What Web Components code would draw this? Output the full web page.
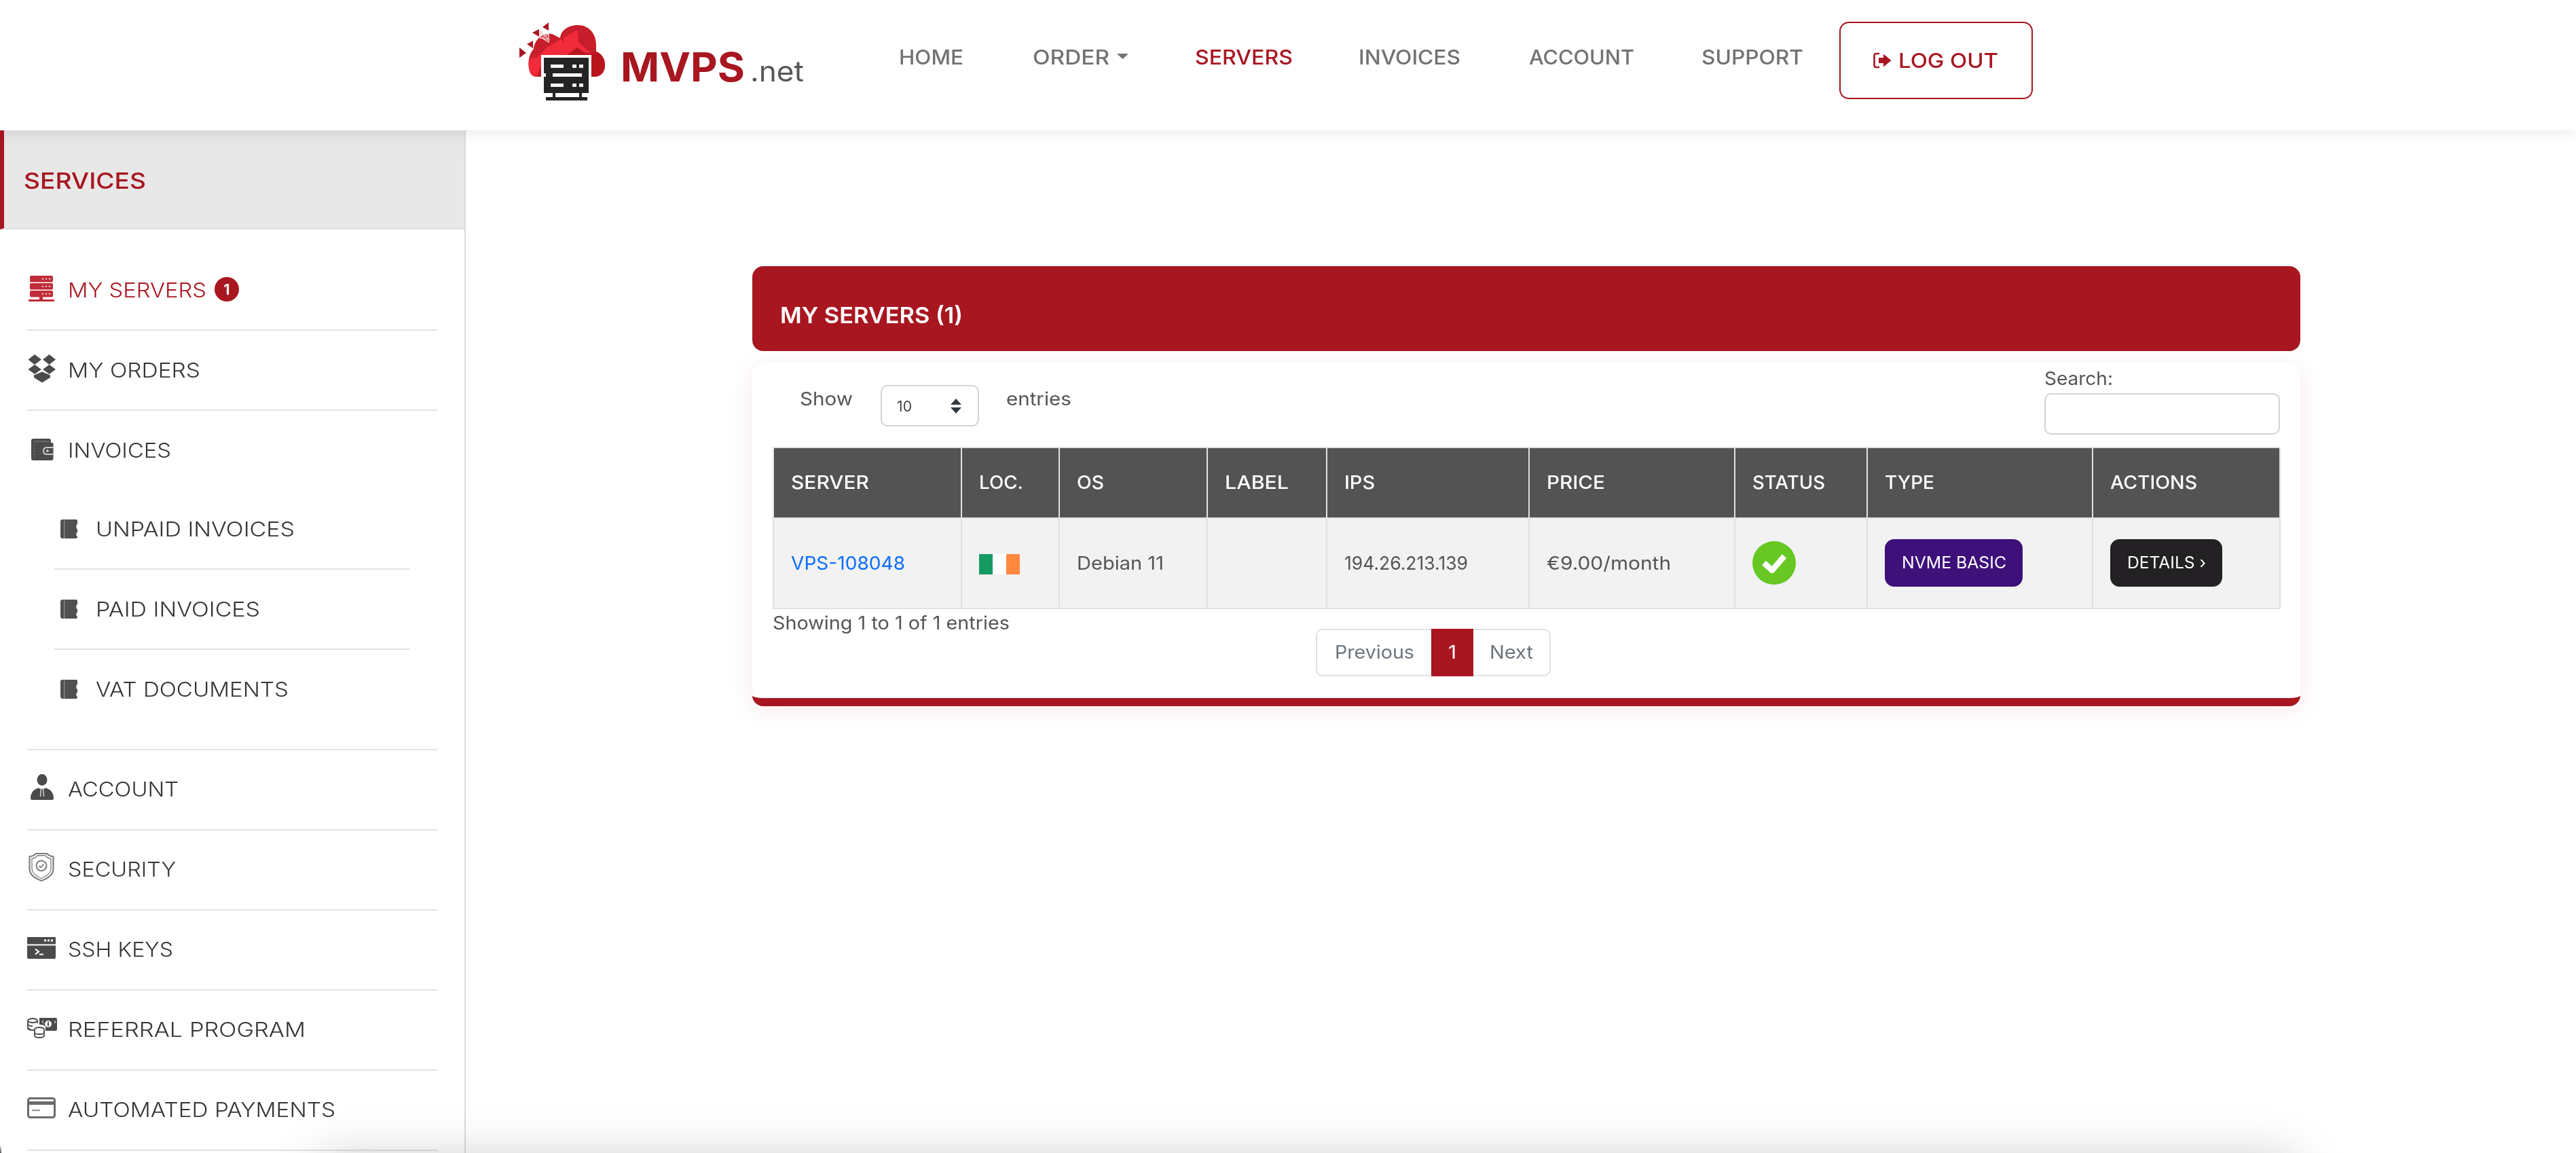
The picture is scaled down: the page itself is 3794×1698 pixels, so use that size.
<!DOCTYPE html>
<html lang="en"><head><meta charset="utf-8"><title>MVPS.net</title>
<style>
html,body{margin:0;padding:0;height:100%;background:#fff;overflow:hidden}
body{font-family:Inter,"Liberation Sans",sans-serif;color:#555}
</style></head><body>
<mv-app>
  <mv-header slot="top">
    <mv-logo></mv-logo>
    <nav-link w="197"><t-f w="95" n="90.8">HOME</t-f></nav-link>
    <nav-link w="239" caret><t-f w="113" n="101.6">ORDER</t-f></nav-link>
    <nav-link w="241" active><t-f w="144" n="134.6">SERVERS</t-f></nav-link>
    <nav-link w="251"><t-f w="150" n="141.7">INVOICES</t-f></nav-link>
    <nav-link w="254"><t-f w="155" n="151.7">ACCOUNT</t-f></nav-link>
    <nav-link w="203"><t-f w="150" n="142.1">SUPPORT</t-f></nav-link>
    <logout-btn><t-f w="147" n="134.3">LOG OUT</t-f></logout-btn>
  </mv-header>
  <mv-sidebar slot="side">
    <side-item icon="server" active badge="1"><t-f w="204" n="186.8">MY SERVERS</t-f></side-item>
    <side-item icon="box"><t-f w="195" n="174.6">MY ORDERS</t-f></side-item>
    <side-item icon="wallet" bare><t-f w="152" n="139.1">INVOICES</t-f></side-item>
    <side-group>
      <sub-item><t-f w="293" n="258.7">UNPAID INVOICES</t-f></sub-item>
      <sub-item><t-f w="242" n="213.8">PAID INVOICES</t-f></sub-item>
      <sub-item last><t-f w="284" n="257.3">VAT DOCUMENTS</t-f></sub-item>
    </side-group>
    <side-item icon="user"><t-f w="163" n="149.7">ACCOUNT</t-f></side-item>
    <side-item icon="shield"><t-f w="159" n="147.3">SECURITY</t-f></side-item>
    <side-item icon="term"><t-f w="155" n="144.8">SSH KEYS</t-f></side-item>
    <side-item icon="money"><t-f w="350" n="305.2">REFERRAL PROGRAM</t-f></side-item>
    <side-item icon="card"><t-f w="394" n="354.5">AUTOMATED PAYMENTS</t-f></side-item>
  </mv-sidebar>
  <mv-main slot="main">
    <server-card>
      <t-f slot="title" w="269" n="258.5">MY SERVERS (1)</t-f>
      <dt-toolbar></dt-toolbar>
      <dt-table></dt-table>
      <dt-footer></dt-footer>
    </server-card>
  </mv-main>
</mv-app>
<script>
const RED='#a81620';
customElements.define('t-f',class extends HTMLElement{
  constructor(){super();this.attachShadow({mode:'open'}).innerHTML='<style>:host{display:inline-block;white-space:nowrap;transform-origin:0 50%}</style><slot></slot>';}
  connectedCallback(){const w=+this.getAttribute('w'),n=+this.getAttribute('n');this.style.width=w+'px';this.style.transform='scaleX('+(w/n).toFixed(4)+')';}
});
function comp(name,css,html){
  customElements.define(name,class extends HTMLElement{
    constructor(){super();this.attachShadow({mode:'open'});}
    connectedCallback(){
      const h=typeof html==='function'?html(this):html;
      this.shadowRoot.innerHTML='<style>'+css+'</style>'+h;
      const w=this.getAttribute('w'); if(w) this.style.width=w+'px';
    }
  });
}
const ICONS={
server:`<g fill="currentColor"><rect x="4" y="1" width="34" height="9.5" rx="2"/><rect x="4" y="12" width="34" height="9.5" rx="2"/><rect x="4" y="23" width="34" height="9.5" rx="2"/><rect x="18" y="32" width="5" height="5"/><rect x="2" y="36" width="38" height="3" rx="1"/></g><g fill="#fff" opacity=".7"><circle cx="23" cy="5.7" r="1.3"/><circle cx="28" cy="5.7" r="1.3"/><circle cx="33" cy="5.7" r="1.3"/><circle cx="23" cy="16.7" r="1.3"/><circle cx="28" cy="16.7" r="1.3"/><circle cx="33" cy="16.7" r="1.3"/><circle cx="23" cy="27.7" r="1.3"/><circle cx="28" cy="27.7" r="1.3"/><circle cx="33" cy="27.7" r="1.3"/></g>`,
box:`<g fill="currentColor"><path d="M11 -1 L21 6.5 L11 14 L1.5 6.5Z"/><path d="M32.5 -1 L42 6.500 L32.5 14 L23 6.500Z"/><path d="M11 14 L21 21 L11 28 L1.5 21Z"/><path d="M32.5 14 L42 21 L32.5 28 L23 21Z"/><path d="M10 29.500 L22 24.500 L34 29.500 V33 L22 40.500 L10 33Z"/></g>`,
wallet:`<path fill="currentColor" d="M9 5 H32 Q35 5 35 8 V11 H37 Q38.500 11 38.500 13 V34 Q38.500 37 35.500 37 H9 Q6 37 6 34 V8 Q6 5 9 5Z"/><path d="M10 9 H33" stroke="#8a8a8a" stroke-width="1"/><path d="M38.500 18 H29 Q24 18 24 23 Q24 28 29 28 H38.500" fill="none" stroke="#c9c9c9" stroke-width="2"/><circle cx="30" cy="23" r="1.800" fill="#ddd"/><path d="M10.500 14 V33" stroke="#8a8a8a" stroke-width="1.200" stroke-dasharray="1.500 3"/>`,
user:`<g fill="currentColor"><ellipse cx="22" cy="8.500" rx="7.500" ry="8.500"/><path d="M5 36 Q5 24 16 20.500 L22 22 L28 20.500 Q39 24 39 36 Q39 38 37 38 H7 Q5 38 5 36Z"/></g><path d="M20.500 21 L19.500 33 M23.500 21 L24.500 33" stroke="#fff" stroke-width="1.100" fill="none"/>`,
shield:`<g fill="none" stroke="currentColor"><path stroke-width="2.200" d="M3.500 3.500 Q9 3 13 -1 H29 Q33 3 38.500 3.500 V22 Q38 33 21 39 Q4 33 3.500 22Z"/><path stroke-width="1.300" d="M7 6.500 Q12 6 15 2 H27 Q30 6 35 6.500 V22 Q34 30.500 21 35.500 Q8 30.500 7 22Z"/><circle cx="21" cy="17" r="7.500" stroke-width="2"/><path stroke-width="1.800" d="M17.500 17 L20 19.500 L24.500 14.500"/></g>`,
term:`<path fill="currentColor" d="M0 4 H42 V14.500 H0Z M0 16.500 H42 V34 Q42 36 40 36 H2 Q0 36 0 34Z"/><g fill="#fff"><rect x="25" y="7.500" width="3" height="3"/><rect x="30" y="7.500" width="3" height="3"/><rect x="35" y="7.500" width="3" height="3"/><rect x="18" y="28.500" width="6" height="2"/></g><path d="M12 21.500 L17 25.500 L12 29.500" fill="none" stroke="#fff" stroke-width="2.200"/>`,
money:`<g fill="none" stroke="currentColor" stroke-width="1.800"><ellipse cx="8" cy="9" rx="7" ry="3"/><path d="M1 9 V20 Q1 23 8 23 Q11 23 13 22 M15 9 V13"/><path d="M1 14 Q1 17 8 17 M1 19 Q1 21 5 22"/></g><path fill="currentColor" d="M18 5 H42 Q44 5 44 7 V22 Q44 24 42 24 H27 V18 Q24 15 21 15 H18Z"/><circle cx="31" cy="14" r="5" fill="#fff"/><rect x="30" y="10.500" width="2" height="7" fill="#555"/><path d="M22 11 L24 9 M22 11 L24 13 M40 9 L42 11 L40 13" stroke="#fff" stroke-width="1" fill="none"/><g fill="#fff" stroke="currentColor" stroke-width="1.800"><ellipse cx="18" cy="22" rx="7" ry="3"/><path d="M11 22 V31 Q11 34 18 34 Q25 34 25 31 V22"/><path d="M11 27 Q11 29 18 29 Q25 29 25 27" fill="none"/></g>`,
card:`<g fill="none" stroke="currentColor"><rect x="1.500" y="5.500" width="39" height="28" rx="3" stroke-width="3"/></g><rect x="1.500" y="10" width="39" height="5" fill="currentColor"/><rect x="7" y="22" width="12" height="2.200" fill="currentColor" opacity=".7"/>`
};
const BOOK=`<path fill="currentColor" d="M3 0 H23 Q25 0 25 2 V7 L23.500 8 V13 L25 14 V19 L23.500 20 V24 L25 25 V26 Q25 28 23 28 H3 Q0 28 0 25 V3 Q0 0 3 0Z"/><rect x="5" y="0" width="1.300" height="28" fill="#8d8d8d"/>`;

comp('mv-app',`:host{display:grid;grid-template-columns:686px 1fr;grid-template-rows:192px 1fr;height:1698px;width:100%;position:relative;overflow:hidden}
 ::slotted([slot=top]){grid-column:1/3;position:relative;z-index:2}
 .fade{position:absolute;left:470px;width:2910px;top:1712px;height:300px;box-shadow:0 0 70px rgba(0,0,0,.25);z-index:3;pointer-events:none}
 .speck{position:absolute;left:0;top:1686px;width:2px;height:12px;background:linear-gradient(rgba(90,90,90,0),#555);z-index:3}`,
 `<slot name="top"></slot><slot name="side"></slot><slot name="main"></slot><div class="fade"></div><div class="speck"></div>`);

comp('mv-header',`:host{display:grid;grid-template-columns:559px 197px 239px 241px 251px 254px 203px 285px;padding:32px 0 0 765px;box-sizing:border-box;height:192px;background:#fff;box-shadow:0 0 22px rgba(0,0,0,.11);align-items:start}`,`<slot></slot>`);

comp('mv-logo',`:host{display:flex;height:115px;align-items:flex-start}
 svg{display:block;width:126px;height:115px;filter:blur(.45px);margin-top:1px;flex:none}
 .t{display:flex;align-items:baseline;margin:31px 0 0 23px;font-family:Inter,"Liberation Sans",sans-serif;line-height:72px;white-space:nowrap}
 .m{font-size:59px;font-weight:700;color:${RED}}
 .n{font-size:42px;font-weight:400;color:#55585a;margin-left:8px}`,
 `<svg viewBox="765 33 126 115" aria-hidden="true">
 <path fill="#c81d2a" d="M786 72 C787 58 800 48 813 50 L825 56 C826 44 838 37 851 37 C868 37 878 50 878 66 V76 C886 79 891 86 891 96 C891 107 884 113 875 113 H790 C782 113 778.500 105 778.500 94 C778.500 84 782 76 786 72Z"/>
 <path fill="#f22b3a" d="M790 85 L808 68 L826 58 L846 78 L856 90 L800 90 L790 113 C782 113 778.500 105 778.500 94 C778.500 88 783 82 790 85Z"/>
 <path fill="#f22b3a" d="M830 56 L850 44 L852 62 L870 78 L850 76 L833 82Z"/>
 <path fill="#b9151f" d="M856 84 L878 76 C886 79 891 86 891 96 C891 107 884 113 875 113 H862Z"/>
 <path fill="#b9151f" d="M833 82 L850 70 L868 82Z"/>
 <g fill="#a81620"><path d="M765 70 L775 78 L765 85Z"/><path d="M785 60 V71 L776 65Z"/><path d="M794 43 V54 L784 48Z"/><path d="M808 33 V45 L799 40Z"/></g>
 <g fill="none" stroke="#f2c7ca" stroke-width="1.500"><path d="M796 46 L808 58 L796 56Z M808 50 V62 L798 56Z"/></g>
 <rect x="797" y="81" width="74" height="34" fill="#fff"/>
 <g fill="#242325"><rect x="801" y="85" width="66" height="23"/><rect x="801" y="113" width="66" height="24"/><rect x="814" y="137" width="4" height="9"/><rect x="853" y="137" width="4" height="9"/><rect x="804" y="143" width="61" height="5"/><path d="M804 108 H814 V113 H804Z M857 108 H867 V113 H857Z"/></g>
 <g fill="#f5f5f5"><rect x="811" y="95" width="19" height="5"/><rect x="843" y="95" width="6" height="5"/><rect x="853" y="95" width="6" height="5"/><rect x="811" y="123" width="19" height="5"/><rect x="843" y="123" width="6" height="5"/><rect x="853" y="123" width="6" height="5"/></g>
 </svg><div class="t"><t-f class="m" w="183" n="175.9">MVPS</t-f><t-f class="n" w="79" n="75.2">.net</t-f></div>`);

comp('nav-link',`:host{display:flex;align-items:center;height:104px;font-size:30px;font-weight:500;color:#727272;white-space:nowrap}
 :host([active]){color:${RED}}
 svg{width:17px;height:8px;margin:-3px 0 0 11px}`,
 el=>`<slot></slot>${el.hasAttribute('caret')?'<svg viewBox="0 0 17 8"><path d="M0 0H17L8.500 8Z" fill="#727272"/></svg>':''}`);

comp('logout-btn',`:host{display:flex;align-items:center;justify-content:flex-start;box-sizing:border-box;width:285px;height:114px;border:2.500px solid ${RED};border-radius:14px;color:${RED};font-size:30px;font-weight:500;padding-left:47.500px;white-space:nowrap}
 svg{width:27px;height:24px;margin-right:10px}`,
 `<svg viewBox="0 0 27 24"><path d="M9 2 H4 Q1.500 2 1.500 5 V19 Q1.500 22 4 22 H9" fill="none" stroke="${RED}" stroke-width="2.600"/><path fill="${RED}" d="M8 8 H15 V2.500 L26.500 12 L15 21.500 V16 H8Z"/></svg><slot></slot>`);

comp('mv-sidebar',`:host{display:block;height:1506px;overflow:hidden;border-right:2.500px solid #dcdcdc;box-sizing:border-box;background:#fff}
 h2{margin:0;height:146px;box-sizing:border-box;background:linear-gradient(#e4e4e4,#e8e8e8 30%);border-left:6px solid ${RED};border-bottom:2px solid #e1e1e1;font-size:33px;font-weight:500;color:${RED};line-height:148px;padding-left:29px}
 .list{padding-top:31px}`,
 `<h2><t-f w="180" n="159.8">SERVICES</t-f></h2><div class="list"><slot></slot></div>`);

comp('side-item',`:host{display:block;margin:0 40px;height:118px;box-sizing:border-box;border-bottom:2.500px solid #e2e2e2;color:#353535;font-size:30px;font-weight:300;white-space:nowrap}
 :host([bare]){border-bottom:0;height:116px}
 :host([active]){color:${RED}}
 .r{display:flex;align-items:center;height:115.500px}
 svg{width:44px;height:44px;overflow:visible;flex:none;margin-right:16px;color:#4b4b4b;filter:blur(.4px)}
 :host([active]) svg{color:#c12c38}
 :host([icon=shield]) svg{color:#7e7e7e}
 :host([icon=card]) svg{color:#6a6a6a}
 .b{margin-left:12px;width:36px;height:36px;border-radius:50%;background:${RED};color:#fff;font-size:22px;font-weight:600;display:flex;align-items:center;justify-content:center;margin-top:-2px}`,
 el=>`<div class="r"><svg viewBox="0 0 44 44" aria-hidden="true">${ICONS[el.getAttribute('icon')]}</svg><slot></slot>${el.hasAttribute('badge')?`<span class="b">${el.getAttribute('badge')}</span>`:''}</div>`);

comp('side-group',`:host{display:block;margin:0 40px;padding:0 0 27.500px;border-bottom:2.500px solid #e2e2e2}`,`<slot></slot>`);
comp('sub-item',`:host{display:block;margin:0 40px;height:118px;box-sizing:border-box;border-bottom:2.500px solid #e2e2e2;color:#353535;font-size:30px;font-weight:300;white-space:nowrap}
 :host([last]){border-bottom:0}
 .r{display:flex;align-items:center;height:115.500px;padding-left:9px}
 svg{width:25px;height:28px;flex:none;margin-right:27px;color:#505050;filter:blur(.4px)}`,
 `<div class="r"><svg viewBox="0 0 25 28" aria-hidden="true">${BOOK}</svg><slot></slot></div>`);

comp('mv-main',`:host{display:block;padding:200px 0 0 422px;background:#fff}`,`<slot></slot>`);

comp('server-card',`:host{display:block;width:2280px;font-size:27px;color:#555}
 .h{height:125px;border-radius:16px;background:#a81620;color:#fff;font-size:33px;font-weight:600;padding:18px 0 0 41px;display:flex;align-items:center;white-space:nowrap;box-sizing:border-box}
 .b{margin-top:17px;background:#fff;border-radius:16px;border-bottom:12px solid ${RED};padding:0 30px;box-shadow:0 6px 36px rgba(168,22,32,.09);height:506px;box-sizing:border-box}`,
 `<div class="h"><slot name="title"></slot></div><div class="b"><slot></slot></div>`);

comp('dt-toolbar',`:host{display:flex;justify-content:space-between;align-items:flex-start;height:123.500px;font-weight:400;color:#555;font-size:27px}
 .l{display:flex;align-items:flex-start;margin-top:33px;padding-left:40px;line-height:42px}
 .sel{box-sizing:border-box;width:145px;height:61px;margin:0 40px 0 41px;border:2px solid #ced4da;border-radius:10px;display:flex;align-items:center;justify-content:space-between;padding:0 24px 0 22px;font-size:22px;color:#444;background:#fff}
 .sel svg{width:16px;height:22px}
 .r{margin-top:7px;width:347px;line-height:34px}
 label{display:block;height:38px}
 input{display:block;box-sizing:border-box;width:347px;height:61px;border:2px solid #ced4da;border-radius:10px;background:#fff;margin:0;padding:0}`,
 `<div class="l"><t-f w="78" n="71.1">Show</t-f><div class="sel"><t-f w="22" n="22.8">10</t-f><svg viewBox="0 0 16 22"><path d="M8 0L16 9H0Z M8 22L0 13H16Z" fill="#343a40"/></svg></div><t-f w="96" n="87.7">entries</t-f></div>
 <div class="r"><label><t-f w="101" n="97.4">Search:</t-f></label><input type="text" aria-label="Search"></div>`);

comp('dt-table',`:host{display:block;width:2220px;font-size:27px;color:#555}
 table{border-collapse:collapse;table-layout:fixed;width:2220px}
 th,td{border:2px solid #dee2e6;padding:0 0 0 25px;text-align:left;white-space:nowrap;overflow:hidden}
 th{height:102px;background:#535353;color:#fff;font-weight:500}
 td{height:131px;background:#f2f2f2;font-weight:400}
 td.f{line-height:0}
 a{color:#0d6efd;text-decoration:none}
 .flag{display:flex;width:60px;height:30px;margin-top:4px}
 .flag i{flex:1}
 .ok{display:block;width:64px;height:64px}
 .btn{display:inline-flex;align-items:center;height:70px;border-radius:14px;color:#fff;font-size:24px;line-height:30px;font-weight:400;box-sizing:border-box;padding:0 24.500px;vertical-align:middle}
 .p{background:#3d107a}.k{background:#232123}`,
 `<table><colgroup><col style="width:277px"><col style="width:144px"><col style="width:218px"><col style="width:176px"><col style="width:298px"><col style="width:303px"><col style="width:195px"><col style="width:332px"><col style="width:276px"></colgroup>
 <thead><tr><th><t-f w="115" n="103.7">SERVER</t-f></th><th><t-f w="65" n="63.2">LOC.</t-f></th><th><t-f w="40" n="38.1">OS</t-f></th><th><t-f w="94" n="83.7">LABEL</t-f></th><th><t-f w="45" n="42.1">IPS</t-f></th><th><t-f w="86" n="78.3">PRICE</t-f></th><th><t-f w="107" n="104.6">STATUS</t-f></th><th><t-f w="73" n="70.5">TYPE</t-f></th><th><t-f w="128" n="121.5">ACTIONS</t-f></th></tr></thead>
 <tbody><tr><td><a href="#"><t-f w="168" n="161.5">VPS-108048</t-f></a></td><td><div class="flag"><i style="background:#169b62"></i><i style="background:#fff"></i><i style="background:#ff883e"></i></div></td><td><t-f w="128" n="119">Debian 11</t-f></td><td></td><td><t-f w="182" n="185.5">194.26.213.139</t-f></td><td><t-f w="183" n="165.5">€9.00/month</t-f></td>
 <td><svg class="ok" viewBox="0 0 64 64"><circle cx="32" cy="32" r="32" fill="#67c723"/><path d="M17 32 L29 43 L47 22" fill="none" stroke="#fff" stroke-width="8.500" stroke-linejoin="round"/></svg></td>
 <td class="f"><span class="btn p"><t-f w="154" n="149.1">NVME BASIC</t-f></span></td><td class="f"><span class="btn k"><t-f w="116" n="113.2">DETAILS ›</t-f></span></td></tr></tbody></table>`);

comp('dt-footer',`:host{display:flex;align-items:flex-start;height:133px;font-size:27px;color:#555;font-weight:400}
 .i{width:800px;line-height:42px;white-space:nowrap}
 .pg{display:flex;margin-top:29px;height:70px;color:#6c757d}
 .pg div{box-sizing:border-box;display:flex;align-items:center;justify-content:center;border:2px solid #dee2e6;height:70px}
 .pg .a{width:170px;border-right:0;border-radius:10px 0 0 10px}
 .pg .c{width:62px;background:${RED};border-color:${RED};color:#fff}
 .pg .z{width:114px;border-left:0;border-radius:0 10px 10px 0}`,
 `<div class="i"><t-f w="349" n="327.2">Showing 1 to 1 of 1 entries</t-f></div><div class="pg"><div class="a"><t-f w="117" n="110.3">Previous</t-f></div><div class="c"><t-f w="12" n="11">1</t-f></div><div class="z"><t-f w="64" n="59.6">Next</t-f></div></div>`);
</script>
</body></html>
